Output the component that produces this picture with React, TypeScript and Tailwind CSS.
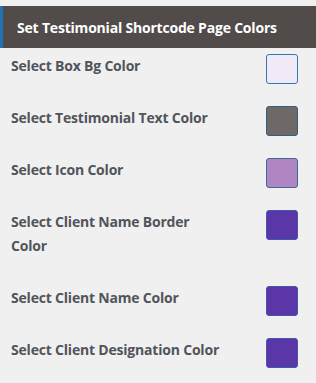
import React from 'react';

const rows = [
  { label: 'Select Box Bg Color', fill: 'bg-[#f2e9f8]', border: 'border-[#2e78b4]' },
  { label: 'Select Testimonial Text Color', fill: 'bg-[#6e6866]', border: 'border-[#2f5f82]' },
  { label: 'Select Icon Color', fill: 'bg-[#af86c2]', border: 'border-[#3a6a96]' },
  { label: 'Select Client Name Border Color', fill: 'bg-[#5a36a8]', border: 'border-[#3f58a8]' },
  { label: 'Select Client Name Color', fill: 'bg-[#5a36a8]', border: 'border-[#3f58a8]' },
  { label: 'Select Client Designation Color', fill: 'bg-[#5a36a8]', border: 'border-[#3f58a8]' },
];

export default function App() {
  return (
    <div className="w-[316px] h-[383px] bg-[#f0f0f1] pt-[6px] font-['Open_Sans',sans-serif] overflow-hidden">
      <div className="h-[42px] bg-[#514b49] border-l-[3px] border-[#2271b1] flex items-center pl-[14px]">
        <h2 className="text-white text-[14px] font-bold tracking-[-0.2px]">Set Testimonial Shortcode Page Colors</h2>
      </div>
      <div className="pl-[11px] pr-[18px]">
        {rows.map((row) => (
          <div key={row.label} className="flex items-start justify-between pt-[6px]">
            <div className="w-[214px] pb-[22px] text-[14px] leading-[24px] font-bold text-[#50555b] tracking-[-0.2px]">
              {row.label}
            </div>
            <div className={`w-[32px] h-[30px] rounded-[3px] border ${row.fill} ${row.border}`} />
          </div>
        ))}
      </div>
    </div>
  );
}
